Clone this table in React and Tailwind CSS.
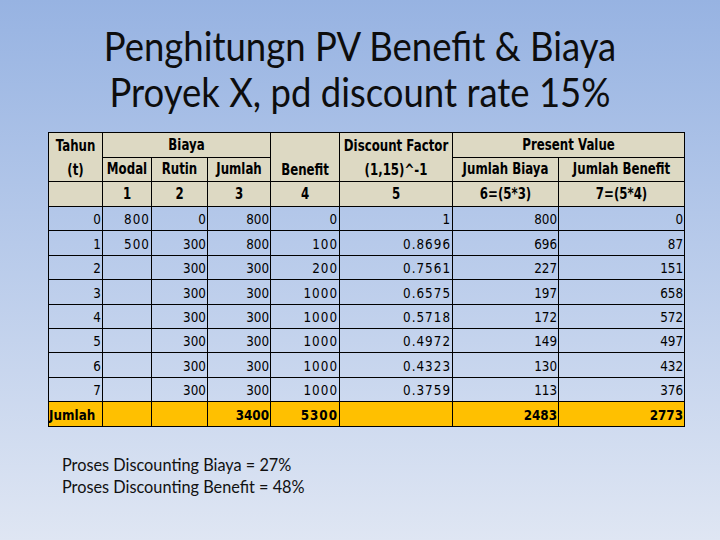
import React from "react";

const rows = [
  ["0", "800", "0", "800", "0", "1", "800", "0"],
  ["1", "500", "300", "800", "100", "0.8696", "696", "87"],
  ["2", "", "300", "300", "200", "0.7561", "227", "151"],
  ["3", "", "300", "300", "1000", "0.6575", "197", "658"],
  ["4", "", "300", "300", "1000", "0.5718", "172", "572"],
  ["5", "", "300", "300", "1000", "0.4972", "149", "497"],
  ["6", "", "300", "300", "1000", "0.4323", "130", "432"],
  ["7", "", "300", "300", "1000", "0.3759", "113", "376"],
];

const spaced = [false, true, false, false, true, true, false, false];

function H({ children }) {
  return <span className="inline-block scale-y-[1.3] origin-bottom">{children}</span>;
}

function D({ children, bold }) {
  return (
    <span className={"inline-block scale-y-[1.2] origin-bottom " + (bold ? "font-bold" : "")}>
      {children}
    </span>
  );
}

export default function App() {
  const hc = "border border-black bg-[#ddd9c3] text-center align-bottom pb-[3px] leading-[14px]";
  return (
    <div className="w-[720px] h-[540px] bg-gradient-to-b from-[#97b3e2] to-[#dfe6f3] flex flex-col overflow-hidden">
      <div className="pt-[22px] flex flex-col items-center text-[#0d0d0d] font-['Lato','Open_Sans',sans-serif] text-[36.5px] leading-[46px]">
        <span className="inline-block scale-y-[1.13]">Penghitungn PV Benefit &amp; Biaya</span>
        <span className="inline-block scale-y-[1.13]">Proyek X, pd discount rate 15%</span>
      </div>
      <div className="pl-[48px] pt-[18px]">
        <table className="table-fixed border-collapse w-[637px] text-black font-['DejaVu_Sans',sans-serif]">
          <colgroup>
            <col className="w-[54px]" />
            <col className="w-[49px]" />
            <col className="w-[56px]" />
            <col className="w-[63px]" />
            <col className="w-[69px]" />
            <col className="w-[113px]" />
            <col className="w-[106px]" />
            <col className="w-[126px]" />
          </colgroup>
          <thead className="text-[11.8px] font-bold">
            <tr className="h-[24px]">
              <td rowSpan={2} className="border border-black bg-[#ddd9c3] text-center p-0">
                <div className="h-[24px] flex items-end justify-center pb-[2px] leading-[14px]"><H>Tahun</H></div>
                <div className="h-[24px] flex items-end justify-center pb-[2px] leading-[14px]"><H>(t)</H></div>
              </td>
              <td colSpan={3} className={hc}><H>Biaya</H></td>
              <td rowSpan={2} className="border border-black bg-[#ddd9c3] text-center p-0">
                <div className="h-[24px]"></div>
                <div className="h-[24px] flex items-end justify-center pb-[2px] leading-[14px]"><H>Benefit</H></div>
              </td>
              <td rowSpan={2} className="border border-black bg-[#ddd9c3] text-center p-0">
                <div className="h-[24px] flex items-end justify-center pb-[2px] leading-[14px]"><H>Discount Factor</H></div>
                <div className="h-[24px] flex items-end justify-center pb-[2px] leading-[14px]"><H>(1,15)^-1</H></div>
              </td>
              <td colSpan={2} className={hc}><H>Present Value</H></td>
            </tr>
            <tr className="h-[24px]">
              <td className={hc}><H>Modal</H></td>
              <td className={hc}><H>Rutin</H></td>
              <td className={hc}><H>Jumlah</H></td>
              <td className={hc}><H>Jumlah Biaya</H></td>
              <td className={hc}><H>Jumlah Benefit</H></td>
            </tr>
            <tr className="h-[25px]">
              <td className={hc}></td>
              <td className={hc}><H>1</H></td>
              <td className={hc}><H>2</H></td>
              <td className={hc}><H>3</H></td>
              <td className={hc}><H>4</H></td>
              <td className={hc}><H>5</H></td>
              <td className={hc}><H>6=(5*3)</H></td>
              <td className={hc}><H>7=(5*4)</H></td>
            </tr>
          </thead>
          <tbody className="text-[12px]">
            {rows.map((r, i) => (
              <tr key={i} className="h-[24.4px]">
                {r.map((v, j) => (
                  <td
                    key={j}
                    className={
                      "border border-black text-right align-bottom p-0 pr-[1px] pb-[2px] leading-[14px] " +
                      (spaced[j] ? "tracking-[1px]" : "")
                    }
                  >
                    {v && <D>{v}</D>}
                  </td>
                ))}
              </tr>
            ))}
            <tr className="h-[25px] bg-[#ffc000] text-[12px]">
              <td className="border border-black text-left align-bottom p-0 pb-[2px] leading-[14px] font-bold">
                <D bold>Jumlah</D>
              </td>
              <td className="border border-black"></td>
              <td className="border border-black"></td>
              <td className="border border-black text-right align-bottom p-0 pr-[1px] pb-[2px] leading-[14px]"><D bold>3400</D></td>
              <td className="border border-black text-right align-bottom p-0 pr-[1px] pb-[2px] leading-[14px] tracking-[1px]"><D bold>5300</D></td>
              <td className="border border-black"></td>
              <td className="border border-black text-right align-bottom p-0 pr-[1px] pb-[2px] leading-[14px]"><D bold>2483</D></td>
              <td className="border border-black text-right align-bottom p-0 pr-[1px] pb-[2px] leading-[14px]"><D bold>2773</D></td>
            </tr>
          </tbody>
        </table>
      </div>
      <div className="pl-[62px] pt-[27px] flex flex-col font-['Lato','Open_Sans',sans-serif] text-[16.3px] leading-[22px] text-[#111]">
        <span>Proses Discounting Biaya = 27%</span>
        <span>Proses Discounting Benefit = 48%</span>
      </div>
    </div>
  );
}
